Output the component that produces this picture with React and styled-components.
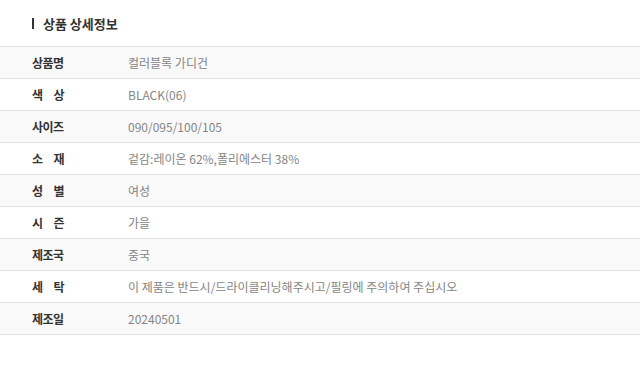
import React from "react";
import styled, { createGlobalStyle } from "styled-components";

const Global = createGlobalStyle`
  html, body { margin: 0; padding: 0; background: #fff; }
  body { font-family: "Noto Sans CJK KR", "Noto Sans", sans-serif; }
`;

const Page = styled.div`
  width: 640px;
  padding-top: 13px;
`;

const Title = styled.h2`
  margin: 0 0 0 32px;
  height: 20px;
  display: flex;
  align-items: center;
  gap: 9px;
  font-size: 13px;
  font-weight: 700;
  color: #333;
  letter-spacing: 0;
  &::before {
    content: "";
    width: 2px;
    height: 11px;
    background: #333;
  }
`;

const Table = styled.div`
  margin-top: 13px;
  border-top: 1px solid #e2e2e2;
`;

const Row = styled.div`
  display: grid;
  grid-template-columns: 96px 1fr;
  height: 31px;
  align-items: center;
  padding-left: 32px;
  border-bottom: 1px solid #e2e2e2;
  background: ${(p) => (p.$shade ? "#f9f9f9" : "#fff")};
`;

const Label = styled.div`
  width: 32px;
  font-size: 12px;
  font-weight: 700;
  color: #333;
  letter-spacing: -0.6px;
  text-align: justify;
  text-align-last: justify;
`;

const Value = styled.div`
  font-size: 12px;
  color: #858585;
  letter-spacing: 0;
`;

const rows = [
  ["상품명", "컬러블록 가디건"],
  ["색 상", "BLACK(06)"],
  ["사이즈", "090/095/100/105"],
  ["소 재", "겉감:레이온 62%,폴리에스터 38%"],
  ["성 별", "여성"],
  ["시 즌", "가을"],
  ["제조국", "중국"],
  ["세 탁", "이 제품은 반드시/드라이클리닝해주시고/필링에 주의하여 주십시오"],
  ["제조일", "20240501"],
];

export default function App() {
  return (
    <Page>
      <Global />
      <Title>상품 상세정보</Title>
      <Table>
        {rows.map(([k, v], i) => (
          <Row key={k} $shade={i % 2 === 0}>
            <Label>{k}</Label>
            <Value>{v}</Value>
          </Row>
        ))}
      </Table>
    </Page>
  );
}
